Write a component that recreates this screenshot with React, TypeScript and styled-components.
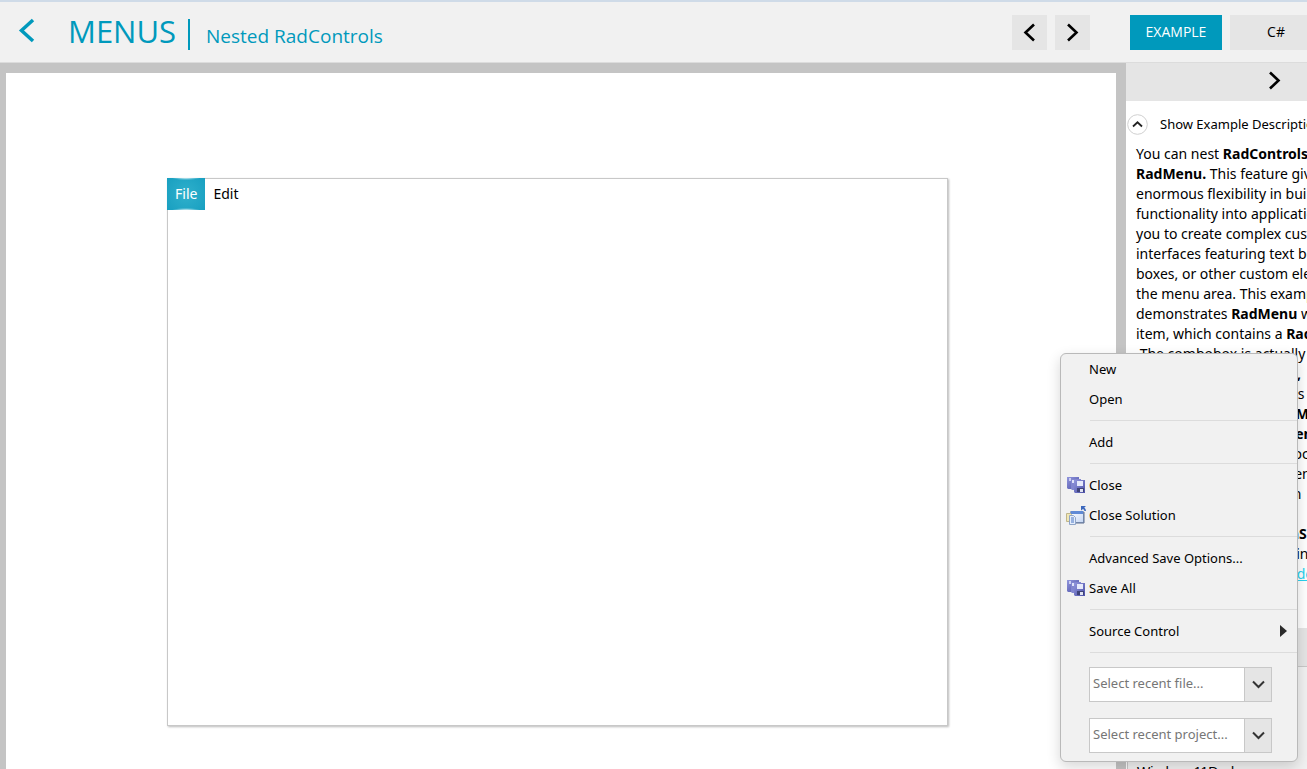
import React from "react";
import styled, { createGlobalStyle, css } from "styled-components";

const accent = "#0099bc";

const GlobalStyle = createGlobalStyle`
  * { box-sizing: border-box; }
  body {
    margin: 0;
    overflow: hidden;
    background: #f1f1f1;
    color: #000;
    font: 14px/20px "Noto Sans", "Open Sans", sans-serif;
  }
  button, input { font: inherit; color: inherit; border: 0; padding: 0; margin: 0; background: none; }
  svg { display: block; flex: none; }
`;

const Page = styled.div`
  position: relative;
  display: flex;
  flex-direction: column;
  height: 100vh;
  overflow: hidden;
`;

const Header = styled.header`
  display: flex;
  flex: none;
  height: 63px;
  border-top: 2px solid #cfdbe8;
  border-bottom: 1px solid #dcdcdc;
  background: #f1f1f1;
  padding-left: 18px;
`;

const BackButton = styled.button`
  align-self: flex-start;
  margin-top: 16px;
  width: 50px;
`;

const Title = styled.h1`
  margin: 0;
  padding: 7px 12px 0 0;
  color: ${accent};
  font: 400 31px/44px "Open Sans", "Noto Sans", sans-serif;
`;

const Divider = styled.span`
  width: 2px;
  height: 31px;
  margin-top: 17px;
  background: ${accent};
`;

const Subtitle = styled.h2`
  margin: 0;
  flex: 1;
  padding: 20px 0 0 16px;
  color: ${accent};
  font: 400 19px/28px "Open Sans", "Noto Sans", sans-serif;
`;

const Pager = styled.nav`
  display: flex;
  gap: 8px;
  padding: 13px 40px 0 0;
`;

const SquareButton = styled.button`
  display: grid;
  place-items: center;
  width: 35px;
  height: 35px;
  background: #e5e5e5;
`;

const Tabs = styled.div`
  display: flex;
  flex: none;
  gap: 8px;
  padding-top: 13px;
  width: 177px;
  overflow: hidden;
`;

const Tab = styled.button<{ $active?: boolean }>`
  flex: none;
  width: 92px;
  height: 35px;
  padding-bottom: 2px;
  font-family: "Open Sans", "Noto Sans", sans-serif;
  background: ${(p) => (p.$active ? accent : "#e5e5e5")};
  color: ${(p) => (p.$active ? "#fff" : "#000")};
`;

const Body = styled.div`
  display: flex;
  flex: 1;
  min-height: 0;
`;

const Stage = styled.main`
  flex: 1;
  min-width: 0;
  display: flex;
  border: 10px solid #c4c4c4;
  border-left-width: 6px;
  border-bottom: 0;
  background: #fff;
  padding: 105px 168px 43px 161px;
`;

const Form = styled.section`
  flex: 1;
  border: 1px solid #c8c8c8;
  box-shadow: 1px 1px 2px #bbb;
`;

const MenuBar = styled.div`
  display: flex;
  margin: -1px;
`;

const MenuBarItem = styled.button<{ $open?: boolean }>`
  height: 32px;
  padding: 0 8px;
  ${(p) =>
    p.$open &&
    css`
      color: #fff;
      background: radial-gradient(ellipse 14px 2px at 50% 0, #c5eaf2, transparent),
        radial-gradient(ellipse 14px 2px at 50% 100%, #c5eaf2, transparent),
        radial-gradient(circle at 50% 50%, #2fb0cc, #189fc0);
    `}
`;

const Sidebar = styled.aside`
  display: flex;
  flex-direction: column;
  flex: none;
  width: 181px;
  overflow: hidden;
  background: #fff;
`;

const Collapse = styled.button`
  display: flex;
  justify-content: flex-end;
  align-items: center;
  flex: none;
  height: 38px;
  padding: 0 26px 4px 0;
  background: #e5e5e5;
`;

const DescriptionToggle = styled.button`
  display: flex;
  align-items: center;
  flex: none;
  gap: 12px;
  height: 43px;
  padding: 3px 0 0 1px;
  font-size: 13px;
  white-space: nowrap;
`;

const Description = styled.div`
  flex: none;
  height: 484px;
  padding-left: 10px;
`;

const Line = styled.p`
  margin: 0;
  height: 20px;
  white-space: pre;
`;

const Link = styled.a`
  color: #28d2f0;
`;

const ThemeHeader = styled.div`
  flex: none;
  height: 38px;
  background: #e5e5e5;
`;

const ThemeList = styled.div`
  flex: 1;
  margin: 0 0 0 1px;
  padding: 95px 0 0 9px;
  border-top: 1px solid #c8c8c8;
  border-left: 1px solid #c8c8c8;
  background: #f1f1f1;
  font-family: "Liberation Sans", Arial, sans-serif;
`;

const Popup = styled.div`
  position: absolute;
  top: 353px;
  right: 9px;
  width: 238px;
  height: 409px;
  border: 1px solid #b9b9b9;
  border-radius: 6px;
  background: #f1f1f1;
  box-shadow: 0 5px 14px rgba(0, 0, 0, 0.16);
  font-size: 13px;
`;

const MenuItem = styled.button`
  display: flex;
  align-items: center;
  width: 100%;
  height: 30px;
  padding-right: 10px;
  text-align: left;
`;

const IconSlot = styled.span`
  width: 28px;
  padding-left: 5px;
`;

const Label = styled.span`
  flex: 1;
`;

const Separator = styled.hr`
  margin: 6px 0 6px 29px;
  border: 0;
  height: 1px;
  background: #dcdcdc;
`;

const Combo = styled.div`
  display: flex;
  width: 183px;
  height: 35px;
  margin: 14px 0 16px 28px;
  border: 1px solid #c8c8c8;
  & + & { margin-top: 0; }
`;

const ComboInput = styled.input`
  flex: 1;
  min-width: 0;
  padding: 0 3px 4px;
  background: #fff;
  &::placeholder { color: #767676; opacity: 1; }
`;

const ComboButton = styled.button`
  display: grid;
  place-items: center;
  width: 27px;
  border-left: 1px solid #c8c8c8;
  background: #e5e5e5;
`;

const Chevron = ({ d, w, h, stroke, color = "#000" }: { d: string; w: number; h: number; stroke: number; color?: string }) => (
  <svg width={w} height={h} viewBox={`0 0 ${w} ${h}`} fill="none" stroke={color} strokeWidth={stroke}>
    <path d={d} />
  </svg>
);

const left = "M11 1.5 L2.5 9.5 L11 17.5";
const right = "M2 1.5 L10.5 9.5 L2 17.5";

const CollapseCircle = () => (
  <svg width="21" height="21" viewBox="0 0 21 21" fill="none">
    <circle cx="10.5" cy="10.5" r="9.8" stroke="#d0d0d0" />
    <path d="M6 12.5 L10.5 8.3 L15 12.5" stroke="#222" strokeWidth="1.8" />
  </svg>
);

const SaveAllIcon = () => (
  <svg width="20" height="18" viewBox="0 0 20 18">
    <defs>
      <linearGradient id="disk" x1="0" y1="0" x2="1" y2="1">
        <stop offset="0" stopColor="#9196dc" />
        <stop offset="1" stopColor="#4c50a8" />
      </linearGradient>
    </defs>
    <path d="M1 1h12v12H2l-1-1z" fill="url(#disk)" />
    <path d="M3 2h2v3H3z" fill="#c9cdf2" />
    <path d="M5 3h10v11H6l-1-1z" fill="#8286d0" />
    <path d="M6 4h2v3H6z" fill="#dfe2fa" />
    <path d="M8 4h11v13H9l-1-1z" fill="url(#disk)" />
    <path d="M11 5h6v5h-6z" fill="#e6e9fc" />
    <path d="M11 12h7v4h-7z" fill="#3f4378" />
    <path d="M14 13h3v3h-3z" fill="#dfe2f2" />
  </svg>
);

const SolutionIcon = () => (
  <svg width="21" height="20" viewBox="0 0 21 20">
    <defs>
      <linearGradient id="pane" x1="0" y1="0" x2="1" y2="1">
        <stop offset="0" stopColor="#ffffff" />
        <stop offset="1" stopColor="#c4d6f4" />
      </linearGradient>
    </defs>
    <path d="M4.500 6.500h13v11h-13z" fill="url(#pane)" stroke="#8a9dbd" />
    <path d="M5 6h12v3H5z" fill="#5f8ad6" />
    <path d="M18 7v11H9" fill="none" stroke="#5d6f92" />
    <path d="M.5 8.500h4l1 1v7h-5z" fill="#f1e7b4" stroke="#c0b68c" />
    <path d="M3.500 10.500h4l2 2v7h-6z" fill="#e4edfb" stroke="#8fa5c8" />
    <path d="M5 13h3M5 15h3M5 17h3" stroke="#4a76c4" />
    <path d="M15 1h5l-1.700 1.500Q20 4 20 6h-1.500Q18 4.500 17 4l-2 1.500z" fill="#3c68bd" />
  </svg>
);

const Arrow = () => (
  <svg width="7" height="12" viewBox="0 0 7 12">
    <path d="M0 0 L7 6 L0 12z" fill="#2b2b2b" />
  </svg>
);

const Item = ({ icon, children, sub }: { icon?: React.ReactNode; children: React.ReactNode; sub?: boolean }) => (
  <MenuItem type="button" role="menuitem">
    <IconSlot>{icon}</IconSlot>
    <Label>{children}</Label>
    {sub && <Arrow />}
  </MenuItem>
);

const ComboBox = ({ text }: { text: string }) => (
  <Combo>
    <ComboInput aria-label={text} placeholder={text} />
    <ComboButton type="button" aria-label="Open list">
      <Chevron w={13} h={9} d="M1 1.500 L6.500 7 L12 1.500" stroke={2} color="#333" />
    </ComboButton>
  </Combo>
);

export default function App() {
  return (
    <Page>
      <GlobalStyle />
      <Header>
        <BackButton type="button" aria-label="Back">
          <Chevron w={18} h={26} d="M15 2 L3.500 12.500 L15 23" stroke={3.5} color={accent} />
        </BackButton>
        <Title>MENUS</Title>
        <Divider />
        <Subtitle>Nested RadControls</Subtitle>
        <Pager>
          <SquareButton type="button" aria-label="Previous example">
            <Chevron w={13} h={19} d={left} stroke={2.6} />
          </SquareButton>
          <SquareButton type="button" aria-label="Next example">
            <Chevron w={13} h={19} d={right} stroke={2.6} />
          </SquareButton>
        </Pager>
        <Tabs>
          <Tab type="button" $active>EXAMPLE</Tab>
          <Tab type="button">C#</Tab>
        </Tabs>
      </Header>
      <Body>
        <Stage>
          <Form>
            <MenuBar role="menubar">
              <MenuBarItem type="button" role="menuitem" $open>File</MenuBarItem>
              <MenuBarItem type="button" role="menuitem">Edit</MenuBarItem>
            </MenuBar>
          </Form>
        </Stage>
        <Sidebar>
          <Collapse type="button" aria-label="Collapse panel">
            <Chevron w={13} h={19} d={right} stroke={2.6} />
          </Collapse>
          <DescriptionToggle type="button">
            <CollapseCircle />
            Show Example Description
          </DescriptionToggle>
          <Description>
            <Line>You can nest <b>RadControls</b> in</Line>
            <Line><b>RadMenu.</b> This feature gives you</Line>
            <Line>enormous flexibility in building</Line>
            <Line>functionality into applications</Line>
            <Line>you to create complex custom</Line>
            <Line>interfaces featuring text boxes</Line>
            <Line>boxes, or other custom elements in</Line>
            <Line>the menu area. This example</Line>
            <Line>demonstrates <b>RadMenu</b> with an</Line>
            <Line>item, which contains a <b>RadCombo</b></Line>
            <Line> The combobox is actually a</Line>
            <Line><b>RadDropDownList item,</b></Line>
            <Line>which are hosted in items</Line>
            <Line>of the type found in <b>RadMenu</b></Line>
            <Line><b>RadDropDownListElement</b></Line>
            <Line>and is placed within a block</Line>
            <Line>within any content element</Line>
            <Line>and can be simply shown</Line>
            <Line> </Line>
            <Line>please see all the <b>ScreenShots</b></Line>
            <Line>examples for more help in</Line>
            <Line><Link href="#documentation">the product help guides demo</Link></Line>
          </Description>
          <ThemeHeader />
          <ThemeList>Windows11Dark</ThemeList>
        </Sidebar>
      </Body>
      <Popup role="menu">
        <Item>New</Item>
        <Item>Open</Item>
        <Separator />
        <Item>Add</Item>
        <Separator />
        <Item icon={<SaveAllIcon />}>Close</Item>
        <Item icon={<SolutionIcon />}>Close Solution</Item>
        <Separator />
        <Item>Advanced Save Options...</Item>
        <Item icon={<SaveAllIcon />}>Save All</Item>
        <Separator />
        <Item sub>Source Control</Item>
        <Separator />
        <ComboBox text="Select recent file..." />
        <ComboBox text="Select recent project..." />
      </Popup>
    </Page>
  );
}
